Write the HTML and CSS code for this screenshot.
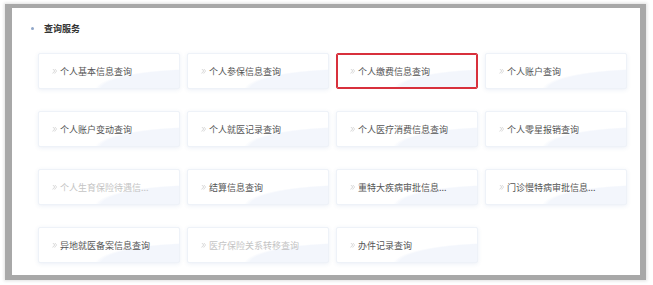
FILE: index.html
```html
<!DOCTYPE html>
<html>
	<head>
		<meta charset="UTF-8" />
		<title>查询服务</title>
		<link rel="stylesheet" href="styles.css">
	</head>
	<body>
		<div class="frame">
			<div class="panel">
				<div class="panel-title"><span class="dot"></span>查询服务</div>
				<div class="menu-grid">
					<a class="menu-card" href="javascript:void(0);"><i class="arr"></i>个人基本信息查询</a>
					<a class="menu-card" href="javascript:void(0);"><i class="arr"></i>个人参保信息查询</a>
					<a class="menu-card active" href="javascript:void(0);"><i class="arr"></i>个人缴费信息查询</a>
					<a class="menu-card" href="javascript:void(0);"><i class="arr"></i>个人账户查询</a>
					<a class="menu-card" href="javascript:void(0);"><i class="arr"></i>个人账户变动查询</a>
					<a class="menu-card" href="javascript:void(0);"><i class="arr"></i>个人就医记录查询</a>
					<a class="menu-card" href="javascript:void(0);"><i class="arr"></i>个人医疗消费信息查询</a>
					<a class="menu-card" href="javascript:void(0);"><i class="arr"></i>个人零星报销查询</a>
					<a class="menu-card disabled" href="javascript:void(0);"><i class="arr"></i>个人生育保险待遇信...</a>
					<a class="menu-card" href="javascript:void(0);"><i class="arr"></i>结算信息查询</a>
					<a class="menu-card" href="javascript:void(0);"><i class="arr"></i>重特大疾病审批信息...</a>
					<a class="menu-card" href="javascript:void(0);"><i class="arr"></i>门诊慢特病审批信息...</a>
					<a class="menu-card" href="javascript:void(0);"><i class="arr"></i>异地就医备案信息查询</a>
					<a class="menu-card disabled" href="javascript:void(0);"><i class="arr"></i>医疗保险关系转移查询</a>
					<a class="menu-card" href="javascript:void(0);"><i class="arr"></i>办件记录查询</a>
				</div>
			</div>
		</div>
	</body>
</html>
```

FILE: styles.css
```css
* {
	margin: 0;
	padding: 0;
	box-sizing: border-box;
}
body {
	font-family: "Noto Sans CJK SC", "Noto Sans", sans-serif;
	font-size: 9px;
	color: #555;
	background: #fff;
}
.frame {
	margin: 4px 7px 5px 5px;
	height: 276px;
	border-style: solid;
	border-color: #a8a8a8;
	border-width: 4px 6px 5px 7px;
	box-shadow: 0 0 3px 1px rgba(0,0,0,0.12);
}
.panel {
	height: 100%;
	background: #fff;
	padding: 14px 13px 0 26px;
}
.panel-title {
	display: flex;
	align-items: center;
	gap: 10px;
	margin-left: -7px;
	height: 12px;
	font-weight: bold;
	color: #333;
}
.panel-title .dot {
	width: 3px;
	height: 3px;
	border-radius: 50%;
	background: #8fa6c8;
}
.menu-grid {
	display: grid;
	grid-template-columns: repeat(4, 142px);
	grid-auto-rows: 36px;
	column-gap: 7px;
	row-gap: 22px;
	margin-top: 19px;
}
.menu-card {
	display: flex;
	align-items: center;
	gap: 3px;
	padding-left: 13px;
	color: #555;
	text-decoration: none;
	border: 1px solid #eef2f8;
	border-radius: 2px;
	box-shadow: 0 1px 4px rgba(60,100,170,0.1);
	background:
		radial-gradient(ellipse 150px 30px at 115% 105%, #f3f6fc 0, #f3f6fc 66%, rgba(243,246,252,0) 70%),
		#fff;
	white-space: nowrap;
}
.menu-card .arr {
	width: 5px;
	height: 5px;
	background: #d6d6d6;
	clip-path: polygon(0 0, 45% 50%, 0 100%, 20% 100%, 65% 50%, 20% 0, 40% 0, 85% 50%, 40% 100%, 60% 100%, 100% 50%, 60% 0);
}
.menu-card.active {
	border-color: #d8303c;
	box-shadow: inset 0 0 0 1px #d8303c;
}
.menu-card.disabled {
	color: #c4c4c4;
}
```
